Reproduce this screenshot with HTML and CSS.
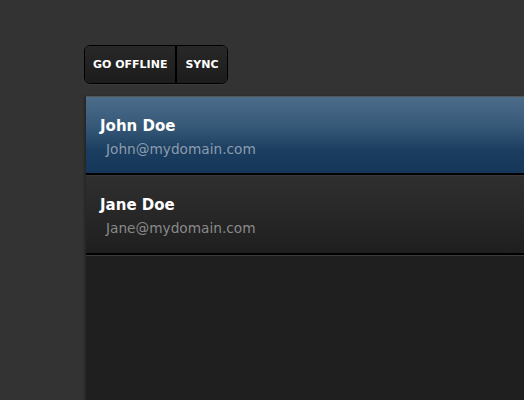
FILE: index.html
```html
<!DOCTYPE html>
<html>
<head>
<meta charset="utf-8">
<link rel="stylesheet" href="styles.css">
</head>
<body>
<div class="page">
  <div class="toolbar">
    <div class="btn-group">
      <button class="btn">GO OFFLINE</button>
      <button class="btn">SYNC</button>
    </div>
  </div>
  <div class="panel">
    <ul class="list">
      <li class="item selected">
        <div class="name">John Doe</div>
        <div class="email">John@mydomain.com</div>
      </li>
      <li class="item">
        <div class="name">Jane Doe</div>
        <div class="email">Jane@mydomain.com</div>
      </li>
    </ul>
  </div>
</div>
</body>
</html>
```
FILE: styles.css
```css
html, body {
  margin: 0;
  padding: 0;
  height: 100%;
  background: #333333;
  overflow: hidden;
}
.page {
  display: flex;
  flex-direction: column;
  height: 100%;
  padding-left: 84px;
  box-sizing: border-box;
  font-family: "DejaVu Sans", Verdana, sans-serif;
}
.toolbar {
  padding-top: 45px;
  height: 51px;
  flex: none;
}
.btn-group {
  display: inline-flex;
  border: 1px solid #000;
  border-radius: 6px;
  overflow: hidden;
  box-shadow: 0 1px 0 rgba(255,255,255,0.04);
}
.btn {
  height: 37px;
  padding: 0 8px;
  margin: 0;
  border: 0;
  background: linear-gradient(#282828, #1c1c1c);
  color: #fff;
  font-family: "DejaVu Sans", Verdana, sans-serif;
  font-weight: bold;
  font-size: 11px;
  line-height: 37px;
}
.btn + .btn {
  border-left: 2px solid #000;
}
.panel {
  flex: 1;
  margin-left: 2px;
  background: #1f1f1f;
  border-top: 1px solid #555;
  box-shadow: -2px 0 2px rgba(0,0,0,0.25);
}
.list {
  list-style: none;
  margin: 0;
  padding: 0;
}
.item {
  height: 80px;
  box-sizing: border-box;
  padding: 20px 0 0 14px;
  border-bottom: 2px solid #000;
  background: linear-gradient(#2f2f2f, #1f1f1f);
  border-top: 1px solid #393939;
}
.item.selected {
  border-top: 0;
  height: 78px;
  padding-top: 20px;
  background: linear-gradient(#4b6c89, #365877 40%, #1b3e60 70%, #15375a);
}
.item:last-child {
  box-shadow: 0 1px 0 #3a3a3a;
}
.name {
  color: #fff;
  font-weight: bold;
  font-size: 15px;
  line-height: 18px;
}
.email {
  margin-top: 6px;
  padding-left: 6px;
  color: #8a8a8a;
  font-size: 13.7px;
  line-height: 16px;
}
.selected .email {
  color: #8c9cad;
}
```
